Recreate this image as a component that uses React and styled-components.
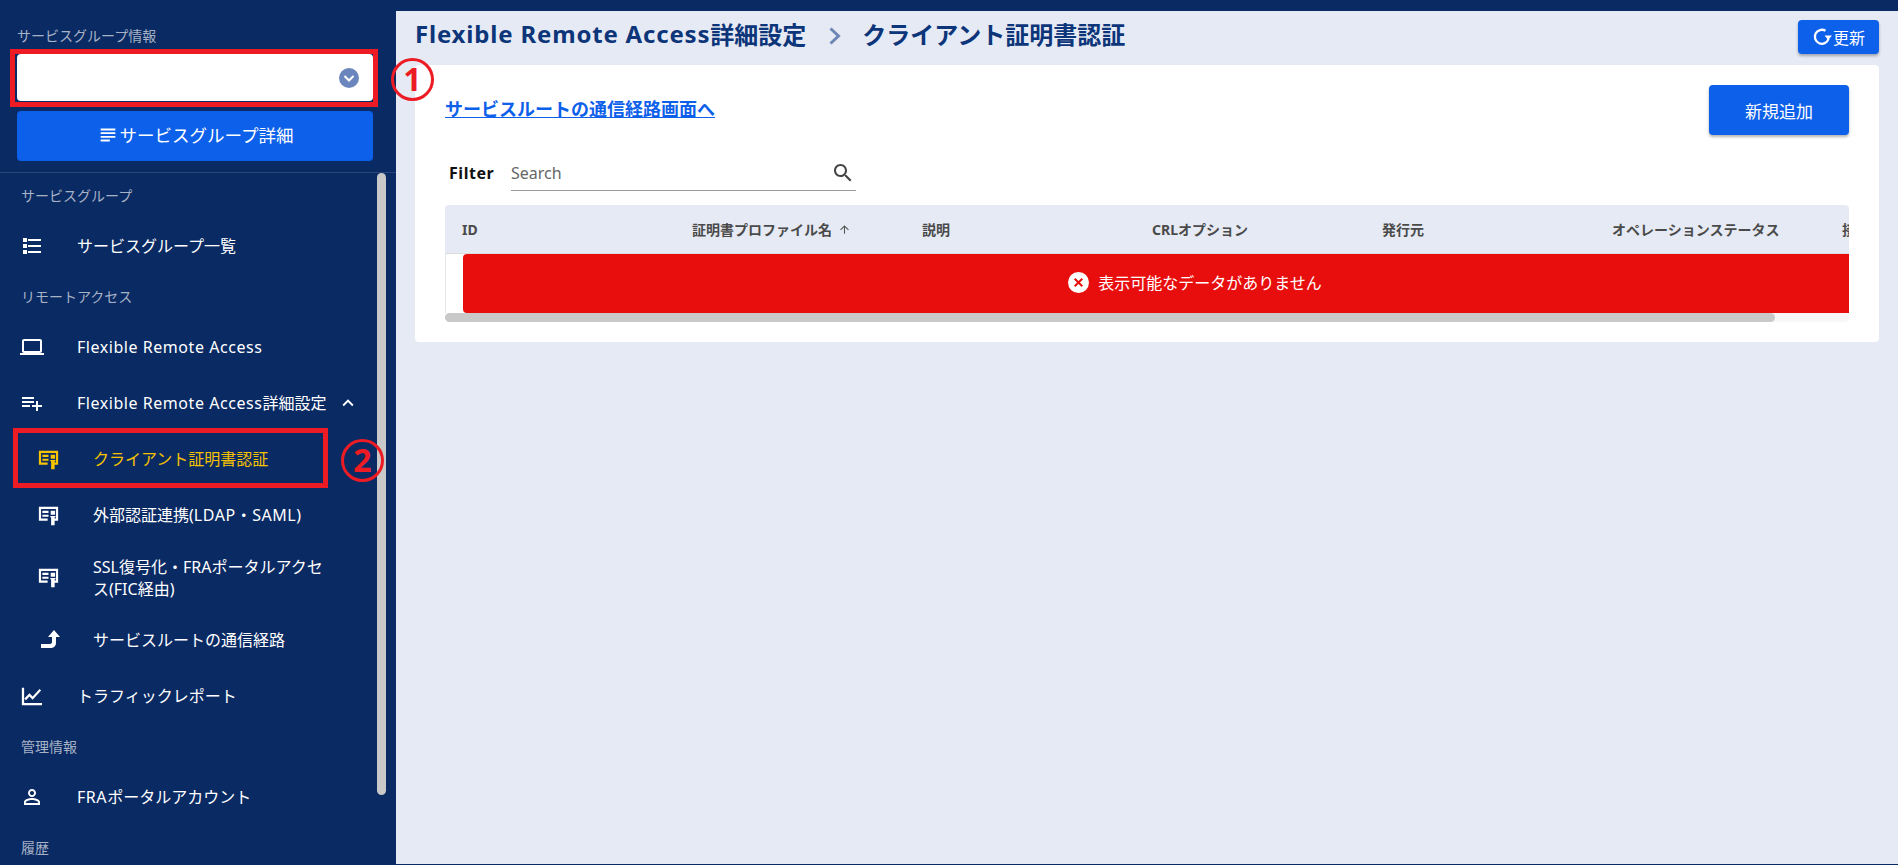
import React from "react";
import styled, { createGlobalStyle } from "styled-components";

const Global = createGlobalStyle`
  html, body { margin: 0; padding: 0; height: 100%; overflow: hidden; }
  body { font-family: "Noto Sans", "Noto Sans CJK JP", sans-serif; background: #e6eaf4; }
  * { box-sizing: border-box; }
`;

const NAVY = "#0a2a63";
const BLUE = "#0d60ea";
const RED = "#ed1c24";

const Page = styled.div`
  position: relative;
  width: 1898px;
  height: 865px;
  display: flex;
  flex-direction: column;
  overflow: hidden;
  border-bottom: 1px solid ${NAVY};
`;

const TopBar = styled.div`
  height: 11px;
  flex: none;
  background: ${NAVY};
`;

const Body = styled.div`
  flex: 1;
  display: flex;
  min-height: 0;
`;

const Side = styled.aside`
  position: relative;
  width: 396px;
  flex: none;
  background: ${NAVY};
  color: #fff;
  overflow: hidden;
  margin-bottom: -1px;
`;

const SideHead = styled.div`
  height: 162px;
  padding: 15px 23px 0 17px;
  border-bottom: 1px solid #2a4579;
`;

const HeadLabel = styled.div`
  font-size: 14px;
  line-height: 20px;
  color: #a7b2c6;
  margin-bottom: 8px;
`;

const SelectBox = styled.div`
  height: 47px;
  background: #fff;
  border-radius: 4px;
  display: flex;
  align-items: center;
  justify-content: flex-end;
  padding-right: 14px;
`;

const DetailButton = styled.button`
  width: 100%;
  height: 50px;
  margin-top: 10px;
  border: 0;
  border-radius: 4px;
  background: ${BLUE};
  color: #fff;
  font: inherit;
  font-size: 17.5px;
  line-height: 24px;
  display: flex;
  align-items: center;
  justify-content: center;
  gap: 1px;
  padding: 0 0 3px;
`;

const SectionLabel = styled.div`
  height: ${(p) => p.$h || 45}px;
  padding-left: 21px;
  display: flex;
  align-items: center;
  font-size: 14px;
  color: #a7b2c6;
`;

const NavItem = styled.div`
  min-height: ${(p) => (p.$multi ? 69 : 56)}px;
  padding: 2px 0 0 ${(p) => (p.$sub ? 36 : 20)}px;
  display: flex;
  align-items: center;
  font-size: 16px;
  line-height: 22px;
  color: ${(p) => (p.$active ? "#f7c200" : "#fff")};
`;

const NavIcon = styled.span`
  width: 57px;
  flex: none;
  display: flex;
  align-items: center;
  padding-left: ${(p) => (p.$sub ? 2 : 0)}px;
`;

const NavText = styled.span`
  max-width: ${(p) => (p.$multi ? 241 : 260)}px;
`;

const Caret = styled.span`
  display: flex;
  margin-left: 11px;
`;

const Lat = styled.span`
  letter-spacing: 0.034em;
`;

const Thumb = styled.div`
  position: absolute;
  left: 377px;
  top: 162px;
  width: 9px;
  height: 622px;
  border-radius: 5px;
  background: #c9c9c9;
`;

const Main = styled.main`
  flex: 1;
  min-width: 0;
  padding: 0 19px;
`;

const Header = styled.header`
  height: 54px;
  display: flex;
  align-items: center;
  justify-content: space-between;
  padding-bottom: 10px;
`;

const Crumbs = styled.div`
  display: flex;
  align-items: center;
  font-size: 24px;
  font-weight: 700;
  color: #0d3579;
  white-space: pre;
`;

const CrumbSep = styled.span`
  display: flex;
  margin: 6px 21px 0 23px;
`;

const UpdateButton = styled.button`
  width: 81px;
  height: 34px;
  margin-top: 8px;
  border: 0;
  border-radius: 4px;
  background: ${BLUE};
  color: #fff;
  font: inherit;
  font-size: 16px;
  display: flex;
  align-items: center;
  justify-content: center;
  gap: 1px;
  padding: 0;
  box-shadow: 0 2px 3px rgba(0, 0, 0, 0.3);
`;

const Card = styled.section`
  height: 277px;
  background: #fff;
  border-radius: 4px;
  padding: 20px 30px;
`;

const CardTop = styled.div`
  display: flex;
  align-items: center;
  justify-content: space-between;
  height: 50px;
`;

const RouteLink = styled.a`
  font-size: 18px;
  font-weight: 700;
  color: #0d60ea;
  text-decoration: underline;
  margin-bottom: 5px;
`;

const AddButton = styled.button`
  width: 140px;
  height: 50px;
  border: 0;
  border-radius: 4px;
  background: ${BLUE};
  color: #fff;
  font: inherit;
  font-size: 17px;
  box-shadow: 0 2px 3px rgba(0, 0, 0, 0.3);
`;

const FilterRow = styled.div`
  display: flex;
  align-items: center;
  height: 40px;
  margin-top: 16px;
  padding-left: 4px;
  margin-bottom: 1px;
`;

const FilterLabel = styled.label`
  width: 62px;
  font-size: 16px;
  font-weight: 700;
  color: #111;
  padding-top: 4px;
`;

const SearchField = styled.div`
  width: 345px;
  height: 40px;
  padding-top: 4px;
  display: flex;
  align-items: center;
  justify-content: space-between;
  border-bottom: 1px solid #999;
  font-size: 16px;
  color: #666;
  padding-right: 1px;
`;

const TableWrap = styled.div`
  margin-top: 14px;
  width: 1404px;
  overflow: hidden;
  border-radius: 4px 4px 0 0;
`;

const HeadRow = styled.div`
  display: flex;
  height: 49px;
  background: #e6eaf4;
  border-bottom: 1px solid #ddd;
  padding-left: 17px;
`;

const HeadCell = styled.div`
  flex: 0 0 230px;
  display: flex;
  align-items: center;
  gap: 6px;
  font-size: 14px;
  font-weight: 700;
  color: #4a4a4a;
  white-space: nowrap;
`;

const EmptyRow = styled.div`
  height: 59px;
  padding-left: 17px;
  border-left: 1px solid #e6e6e6;
`;

const EmptyMessage = styled.div`
  width: 1464px;
  height: 59px;
  padding-bottom: 3px;
  background: #e80e0d;
  border-radius: 4px;
  color: #fff;
  font-size: 16px;
  display: flex;
  align-items: center;
  justify-content: center;
  gap: 9px;
`;

const HScroll = styled.div`
  height: 9px;
  background: #f7f7f7;
  border-radius: 5px;
`;

const HThumb = styled.div`
  width: 1330px;
  height: 9px;
  background: #c9c9c9;
  border-radius: 5px;
`;

const MarkBox = styled.div`
  position: absolute;
  left: ${(p) => p.$x}px;
  top: ${(p) => p.$y}px;
  width: ${(p) => p.$w}px;
  height: ${(p) => p.$h}px;
  border: 5px solid ${RED};
`;

const MarkNum = styled.div`
  position: absolute;
  left: ${(p) => p.$x}px;
  top: ${(p) => p.$y}px;
  width: 43px;
  height: 43px;
  border: 3px solid ${RED};
  border-radius: 50%;
  color: ${RED};
  font-size: 32px;
  font-weight: 700;
  line-height: 36px;
  text-align: center;
`;

const Svg = ({ d, size = 24, color = "currentColor" }) => (
  <svg width={size} height={size} viewBox="0 0 24 24" fill={color}>
    <path d={d} />
  </svg>
);

const paths = {
  subject: "M14 17H4v2h10v-2zm6-8H4v2h16V9zM4 15h16v-2H4v2zM4 5v2h16V5H4z",
  list: "M3 4h4v4H3zM3 10h4v4H3zM3 16h4v4H3zM8 5h13v2H8zM8 11h13v2H8zM8 17h13v2H8z",
  laptop: "M20 18c1.1 0 1.99-.9 1.99-2L22 6c0-1.1-.9-2-2-2H4c-1.1 0-2 .9-2 2v10c0 1.1.9 2 2 2H0v2h24v-2h-4zM4 6h16v10H4V6z",
  playlistAdd: "M14 10H2v2h12v-2zm0-4H2v2h12V6zm4 8v-4h-2v4h-4v2h4v4h2v-4h4v-2h-4zM2 16h8v-2H2v2z",
  expandLess: "M12 8l-6 6 1.41 1.41L12 10.83l4.59 4.58L18 14z",
  cert: "M1 2h22v16h-4v-2.500h1.500V4.500h-17V15.500H11V18H1zM5 6.500h7V9H5zM5 11h7v2.500H5zM14.500 6.500h5V11h-5zM14 12.500h6V14h-1v9h-4v-9h-1z",
  turnUp: "M3 16h9c1.100 0 2-.9 2-2V9h-4l6-7 6 7h-4v6c0 2.800-2.200 5-5 5H3z",
  chart: "M2 3h2.500v16.500H24V22H2zM6.500 16.500l-1.700-1.700 5.500-5.800 3.500 3.500 7.500-8.200 1.700 1.600-9.200 10.100-3.500-3.500z",
  person: "M12 5.900c1.160 0 2.100.94 2.100 2.100s-.94 2.100-2.100 2.100S9.900 9.160 9.900 8s.94-2.100 2.100-2.100m0 9c2.970 0 6.100 1.460 6.100 2.100v1.100H5.900V17c0-.64 3.130-2.100 6.100-2.100M12 4C9.790 4 8 5.790 8 8s1.790 4 4 4 4-1.790 4-4-1.790-4-4-4zm0 9c-2.670 0-8 1.340-8 4v3h16v-3c0-2.660-5.330-4-8-4z",
  search: "M15.500 14h-.79l-.28-.27C15.410 12.590 16 11.110 16 9.500 16 5.910 13.090 3 9.500 3S3 5.910 3 9.500 5.910 16 9.500 16c1.610 0 3.090-.59 4.230-1.570l.27.28v.79l5 4.990L20.490 19l-4.990-5zm-6 0C7.010 14 5 11.990 5 9.500S7.010 5 9.500 5 14 7.010 14 9.500 11.990 14 9.500 14z",
  arrowUp: "M4 12l1.410 1.410L11 7.830V20h2V7.830l5.580 5.590L20 12l-8-8-8 8z",
};

const ChevronDot = () => (
  <svg width="20" height="20" viewBox="0 0 20 20">
    <circle cx="10" cy="10" r="10" fill="#6b86bd" />
    <path d="M5.500 8l4.500 4.500L14.500 8" fill="none" stroke="#fff" strokeWidth="2" />
  </svg>
);

const CrumbArrow = () => (
  <svg width="12" height="18" viewBox="0 0 12 18">
    <path d="M1.500 1.500L9.500 9l-8 7.500" fill="none" stroke="#6e86b5" strokeWidth="3" />
  </svg>
);

const RefreshIcon = () => (
  <svg width="20" height="20" viewBox="0 0 20 20">
    <path d="M13.500 3.800A7 7 0 1 0 16.500 12" fill="none" stroke="#fff" strokeWidth="2.300" />
    <path d="M12.500 8.500h7.500l-3.700 4.500z" fill="#fff" />
  </svg>
);

const ErrorIcon = () => (
  <svg width="21" height="21" viewBox="0 0 21 21">
    <circle cx="10.500" cy="10.500" r="10.500" fill="#fff" />
    <path d="M6.700 6.700l7.600 7.600M14.300 6.700l-7.600 7.600" stroke="#e80e0d" strokeWidth="2" />
  </svg>
);

const menu = [
  { label: "サービスグループ", h: 44 },
  { id: "groups", text: "サービスグループ一覧", icon: "list" },
  { label: "リモートアクセス" },
  { id: "fra", text: <Lat>Flexible Remote Access</Lat>, icon: "laptop" },
  { id: "fra-detail", text: <><Lat>Flexible Remote Access</Lat>詳細設定</>, icon: "playlistAdd", open: true },
  { id: "client", text: "クライアント証明書認証", icon: "cert", sub: true, active: true },
  { id: "auth", text: <>外部認証連携(<Lat>LDAP・SAML</Lat>)</>, icon: "cert", sub: true },
  { id: "ssl", text: "SSL復号化・FRAポータルアクセス(FIC経由)", icon: "cert", sub: true, multi: true },
  { id: "route", text: "サービスルートの通信経路", icon: "turnUp", sub: true },
  { id: "traffic", text: "トラフィックレポート", icon: "chart", size: 22 },
  { label: "管理情報" },
  { id: "account", text: <><Lat>FRA</Lat>ポータルアカウント</>, icon: "person" },
  { label: "履歴" },
];

const columns = ["ID", "証明書プロファイル名", "説明", "CRLオプション", "発行元", "オペレーションステータス", "接続"];

export default function App() {
  return (
    <Page>
      <Global />
      <TopBar />
      <Body>
        <Side>
          <SideHead>
            <HeadLabel>サービスグループ情報</HeadLabel>
            <SelectBox>
              <ChevronDot />
            </SelectBox>
            <DetailButton>
              <Svg d={paths.subject} size={22} />
              サービスグループ詳細
            </DetailButton>
          </SideHead>
          {menu.map((m) =>
            m.label ? (
              <SectionLabel key={m.label} $h={m.h}>{m.label}</SectionLabel>
            ) : (
              <NavItem key={m.id} $sub={m.sub} $active={m.active} $multi={m.multi}>
                <NavIcon $sub={m.sub}>
                  <Svg d={paths[m.icon]} size={m.size || (m.icon === "cert" ? 21 : 24)} />
                </NavIcon>
                <NavText $multi={m.multi}>{m.text}</NavText>
                {m.open && (
                  <Caret>
                    <Svg d={paths.expandLess} size={22} />
                  </Caret>
                )}
              </NavItem>
            )
          )}
          <Thumb />
        </Side>
        <Main>
          <Header>
            <Crumbs>
              <Lat>Flexible Remote Access</Lat>詳細設定
              <CrumbSep>
                <CrumbArrow />
              </CrumbSep>
              クライアント証明書認証
            </Crumbs>
            <UpdateButton>
              <RefreshIcon />
              更新
            </UpdateButton>
          </Header>
          <Card>
            <CardTop>
              <RouteLink href="#">サービスルートの通信経路画面へ</RouteLink>
              <AddButton>新規追加</AddButton>
            </CardTop>
            <FilterRow>
              <FilterLabel><Lat>Filter</Lat></FilterLabel>
              <SearchField>
                Search
                <Svg d={paths.search} size={24} color="#444" />
              </SearchField>
            </FilterRow>
            <TableWrap>
              <HeadRow>
                {columns.map((c) => (
                  <HeadCell key={c}>
                    {c}
                    {c === "証明書プロファイル名" && <Svg d={paths.arrowUp} size={13} color="#555" />}
                  </HeadCell>
                ))}
              </HeadRow>
              <EmptyRow>
                <EmptyMessage>
                  <ErrorIcon />
                  表示可能なデータがありません
                </EmptyMessage>
              </EmptyRow>
              <HScroll>
                <HThumb />
              </HScroll>
            </TableWrap>
          </Card>
        </Main>
      </Body>
      <MarkBox $x={10} $y={49} $w={368} $h={58} />
      <MarkNum $x={391} $y={58}>1</MarkNum>
      <MarkBox $x={13} $y={428} $w={315} $h={60} />
      <MarkNum $x={341} $y={439}>2</MarkNum>
    </Page>
  );
}
